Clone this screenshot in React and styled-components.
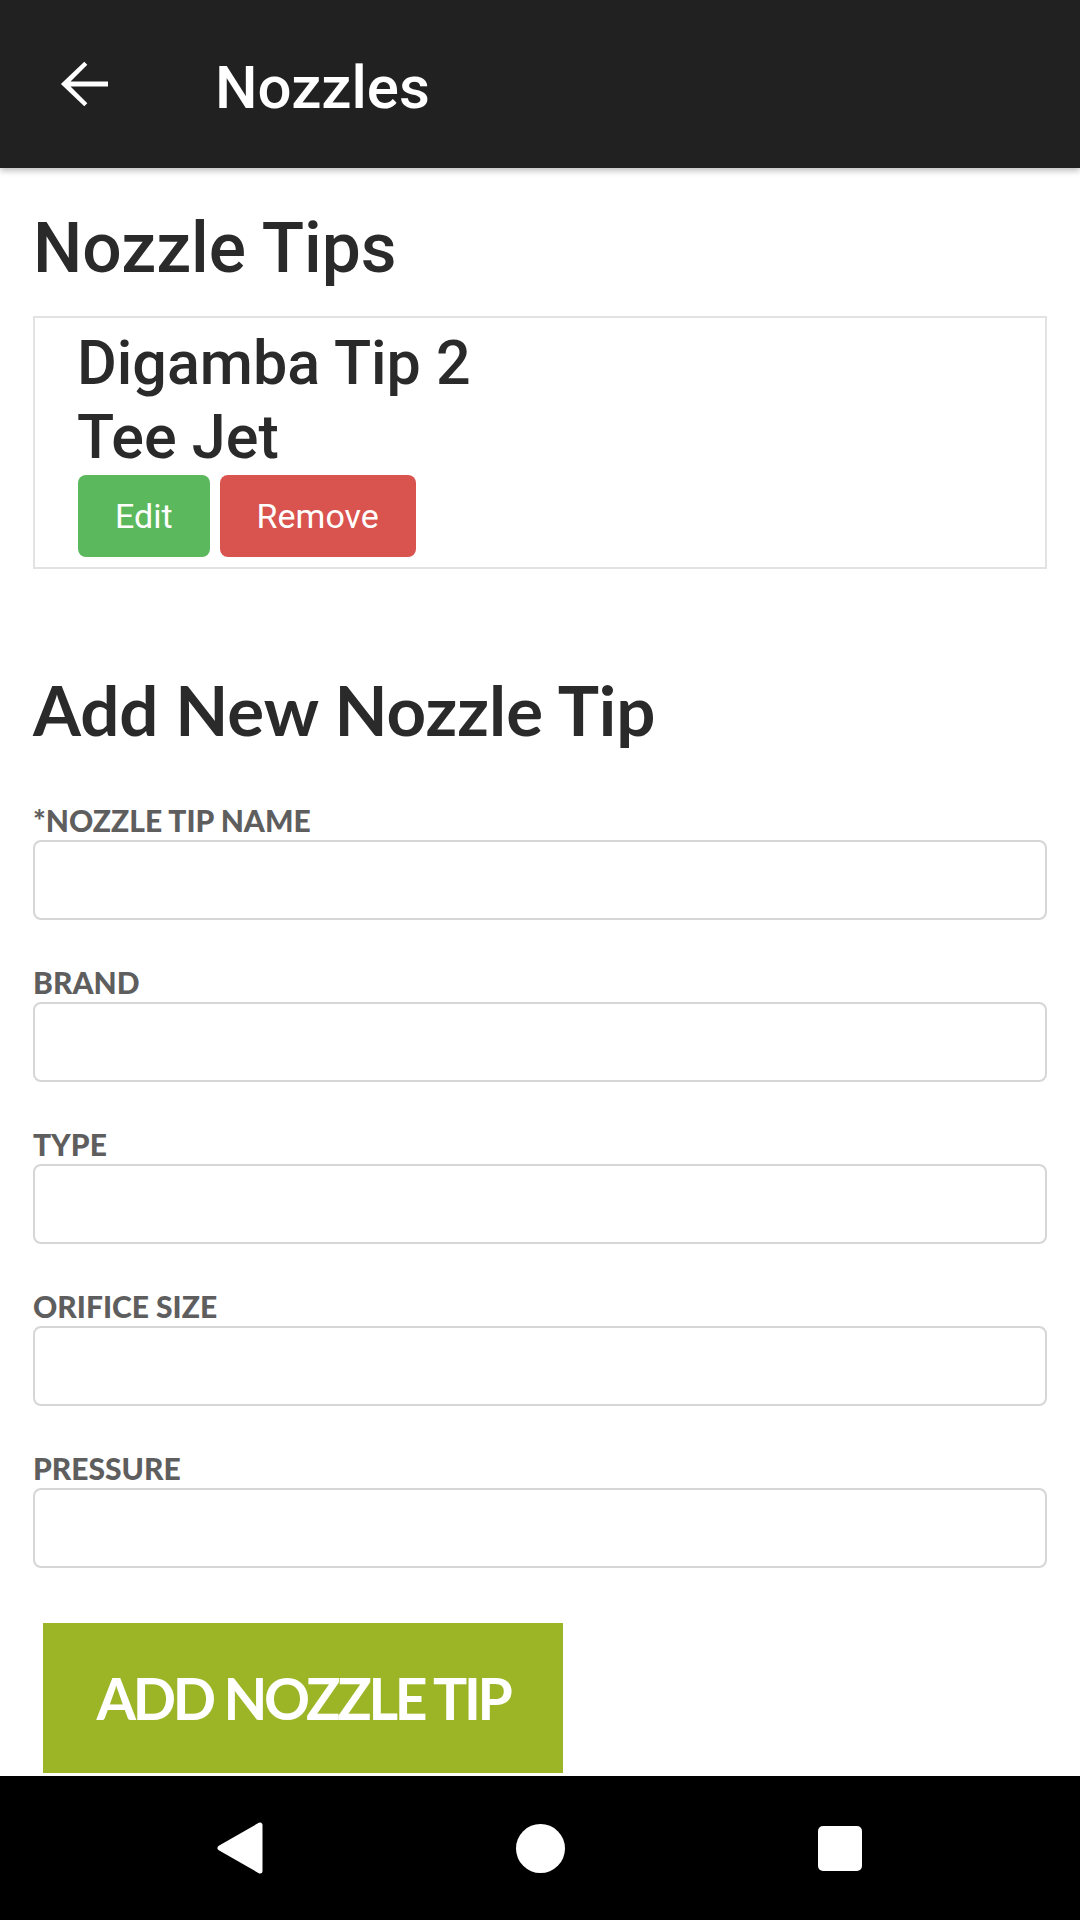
import React from "react";
import styled, { createGlobalStyle } from "styled-components";

const GlobalStyle = createGlobalStyle`
  html, body {
    margin: 0;
    padding: 0;
    background: #ffffff;
  }
  body {
    font-family: Roboto, "Liberation Sans", sans-serif;
  }
  * { box-sizing: border-box; }
`;

const Screen = styled.div`
  width: 1080px;
  height: 1920px;
  display: flex;
  flex-direction: column;
  overflow: hidden;
  background: #ffffff;
`;

const AppBar = styled.header`
  height: 168px;
  flex: 0 0 168px;
  background: #212121;
  display: flex;
  align-items: center;
  padding-left: 48px;
  box-shadow: 0 3px 6px rgba(0, 0, 0, 0.25);
  position: relative;
  z-index: 2;
`;

const BackButton = styled.button`
  width: 72px;
  height: 72px;
  padding: 0;
  border: 0;
  background: transparent;
  display: flex;
  align-items: center;
  justify-content: center;
  margin-right: 95px;
`;

const AppTitle = styled.h1`
  margin: 7px 0 0;
  font-family: Roboto, sans-serif;
  font-weight: 500;
  font-size: 60px;
  line-height: 1;
  color: #ffffff;
`;

const Content = styled.main`
  flex: 1 1 auto;
  overflow: hidden;
  padding: 0 33px;
`;

const SectionTitle = styled.h2`
  margin: 41px 0 27px;
  font-family: Roboto, sans-serif;
  font-weight: 500;
  font-size: 69.5px;
  line-height: 80px;
  color: #2a2a2a;
`;

const TipCard = styled.ul`
  list-style: none;
  margin: 0;
  border: 2px solid #e2e2e2;
  padding: 8px 0 10px 42px;
`;

const TipItem = styled.li`
  display: flex;
  flex-direction: column;
`;

const TipLine = styled.div`
  font-family: Roboto, sans-serif;
  font-weight: 500;
  font-size: 61px;
  line-height: 74px;
  color: #2a2a2a;
`;

const ButtonRow = styled.div`
  display: flex;
  gap: 10px;
  margin: 1px 0 0 1px;
`;

const ActionButton = styled.button`
  height: 82px;
  padding: 0 37px;
  border: 0;
  border-radius: 8px;
  background: ${(p) => (p.$variant === "danger" ? "#d9534f" : "#5cb85c")};
  color: #ffffff;
  font-family: Roboto, sans-serif;
  font-weight: 400;
  font-size: 34px;
  line-height: 1;
`;

const FormTitle = styled.h2`
  margin: 101px 0 52px;
  font-family: Lato, "Open Sans", sans-serif;
  font-weight: 700;
  font-size: 69px;
  line-height: 80px;
  color: #2a2a2a;
`;

const Form = styled.form`
  display: flex;
  flex-direction: column;
  gap: 44px;
`;

const Field = styled.div`
  display: flex;
  flex-direction: column;
  gap: 2px;
`;

const Label = styled.label`
  font-family: Lato, "Open Sans", sans-serif;
  font-weight: 900;
  font-size: 30px;
  line-height: 36px;
  color: #5e5e5e;
  text-transform: uppercase;
`;

const Input = styled.input`
  height: 80px;
  width: 100%;
  border: 2px solid #d6d6d6;
  border-radius: 8px;
  background: #ffffff;
  font-family: Lato, sans-serif;
  font-size: 30px;
  padding: 0 16px;
  outline: none;
`;

const SubmitButton = styled.button`
  margin: 55px 0 0 10px;
  height: 150px;
  width: 520px;
  border: 0;
  border-radius: 0;
  background: #9bb526;
  color: #ffffff;
  display: flex;
  align-items: center;
  justify-content: center;
  font-family: Lato, sans-serif;
  font-weight: 700;
  font-size: 57px;
  line-height: 1;
  letter-spacing: -3.3px;
  text-transform: uppercase;
`;

const NavBar = styled.nav`
  height: 144px;
  flex: 0 0 144px;
  background: #000000;
  display: grid;
  grid-template-columns: repeat(3, 300px);
  padding: 0 90px;
  align-items: center;
  justify-items: center;
`;

const HomeDot = styled.span`
  display: block;
  width: 49px;
  height: 49px;
  border-radius: 50%;
  background: #ffffff;
`;

const RecentsSquare = styled.span`
  display: block;
  width: 44px;
  height: 45px;
  border-radius: 5px;
  background: #ffffff;
`;

const fields = ["*Nozzle Tip Name", "Brand", "Type", "Orifice Size", "Pressure"];

export default function App() {
  return (
    <>
      <GlobalStyle />
      <Screen>
        <AppBar>
          <BackButton aria-label="Back">
            <svg width="72" height="72" viewBox="0 0 24 24">
              <path
                fill="#ffffff"
                d="M20 11.2H7.5l5.6-5.6-1-1L4.3 12l7.8 7.4 1-1-5.6-5.6H20v-1.6z"
              />
            </svg>
          </BackButton>
          <AppTitle>Nozzles</AppTitle>
        </AppBar>
        <Content>
          <SectionTitle>Nozzle Tips</SectionTitle>
          <TipCard>
            <TipItem>
              <TipLine>Digamba Tip 2</TipLine>
              <TipLine>Tee Jet</TipLine>
              <ButtonRow>
                <ActionButton type="button">Edit</ActionButton>
                <ActionButton type="button" $variant="danger">
                  Remove
                </ActionButton>
              </ButtonRow>
            </TipItem>
          </TipCard>
          <FormTitle>Add New Nozzle Tip</FormTitle>
          <Form onSubmit={(e) => e.preventDefault()}>
            {fields.map((f) => (
              <Field key={f}>
                <Label>{f}</Label>
                <Input type="text" />
              </Field>
            ))}
          </Form>
          <SubmitButton type="button">Add Nozzle Tip</SubmitButton>
        </Content>
        <NavBar>
          <svg width="50" height="56" viewBox="0 0 50 56">
            <polygon
              points="5,28 45,5 45,51"
              fill="#ffffff"
              stroke="#ffffff"
              strokeWidth="5"
              strokeLinejoin="round"
            />
          </svg>
          <HomeDot />
          <RecentsSquare />
        </NavBar>
      </Screen>
    </>
  );
}
